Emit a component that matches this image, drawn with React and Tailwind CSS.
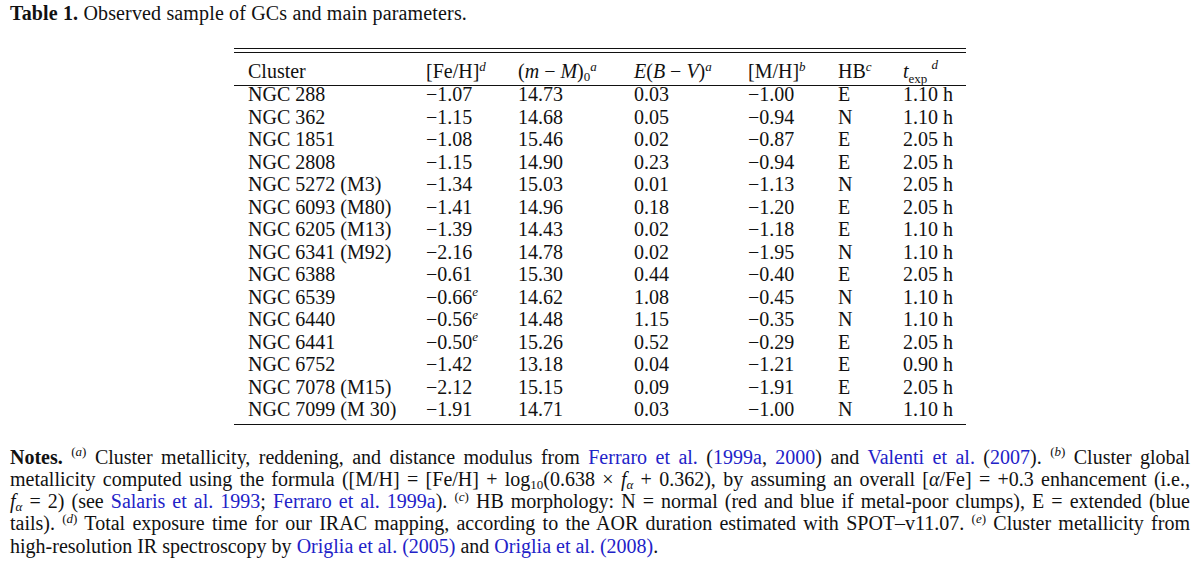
import React from 'react'

const rows = [
  ['NGC 288', '−1.07', '', '14.73', '0.03', '−1.00', 'E', '1.10 h'],
  ['NGC 362', '−1.15', '', '14.68', '0.05', '−0.94', 'N', '1.10 h'],
  ['NGC 1851', '−1.08', '', '15.46', '0.02', '−0.87', 'E', '2.05 h'],
  ['NGC 2808', '−1.15', '', '14.90', '0.23', '−0.94', 'E', '2.05 h'],
  ['NGC 5272 (M3)', '−1.34', '', '15.03', '0.01', '−1.13', 'N', '2.05 h'],
  ['NGC 6093 (M80)', '−1.41', '', '14.96', '0.18', '−1.20', 'E', '2.05 h'],
  ['NGC 6205 (M13)', '−1.39', '', '14.43', '0.02', '−1.18', 'E', '1.10 h'],
  ['NGC 6341 (M92)', '−2.16', '', '14.78', '0.02', '−1.95', 'N', '1.10 h'],
  ['NGC 6388', '−0.61', '', '15.30', '0.44', '−0.40', 'E', '2.05 h'],
  ['NGC 6539', '−0.66', 'e', '14.62', '1.08', '−0.45', 'N', '1.10 h'],
  ['NGC 6440', '−0.56', 'e', '14.48', '1.15', '−0.35', 'N', '1.10 h'],
  ['NGC 6441', '−0.50', 'e', '15.26', '0.52', '−0.29', 'E', '2.05 h'],
  ['NGC 6752', '−1.42', '', '13.18', '0.04', '−1.21', 'E', '0.90 h'],
  ['NGC 7078 (M15)', '−2.12', '', '15.15', '0.09', '−1.91', 'E', '2.05 h'],
  ['NGC 7099 (M 30)', '−1.91', '', '14.71', '0.03', '−1.00', 'N', '1.10 h'],
]

const cols = 'grid grid-cols-[178px_92px_116px_114px_90px_65px_63px]'

function Sup({ children }) {
  return <sup className="text-[13px] italic leading-none align-baseline relative -top-[0.55em]">{children}</sup>
}

function Ref({ children }) {
  return <span className="text-[#2222c8]">{children}</span>
}

function Mark({ children }) {
  return (
    <sup className="text-[13px] leading-none align-baseline relative -top-[0.55em]">
      (<i>{children}</i>)
    </sup>
  )
}

function Sub({ children }) {
  return <sub className="text-[13px] leading-none align-baseline relative top-[0.25em]">{children}</sub>
}

const line = 'block text-justify [text-align-last:justify] whitespace-nowrap'

export default function App() {
  return (
    <div className="w-[1200px] h-[564px] bg-white text-[#111] font-['Liberation_Serif','Times_New_Roman',serif] overflow-hidden">
      <div className="pl-[10px] pt-[2px] text-[20px] leading-[22px] tracking-[0.15px]">
        <b>Table 1.</b> Observed sample of GCs and main parameters.
      </div>

      {/* table */}
      <div className="ml-[234px] w-[732px] mt-[24px]">
        <div className="border-t-[1.5px] border-[#111]" />
        <div className="mt-[3px] border-t-[1.5px] border-[#111]" />
        <div className={`${cols} pl-[14px] text-[20px] leading-[22px] pt-[7px] h-[32px]`}>
          <div>Cluster</div>
          <div>[Fe/H]<Sup>d</Sup></div>
          <div>(<i>m</i> − <i>M</i>)<Sub>0</Sub><Sup>a</Sup></div>
          <div><i>E</i>(<i>B</i> − <i>V</i>)<Sup>a</Sup></div>
          <div>[M/H]<Sup>b</Sup></div>
          <div>HB<Sup>c</Sup></div>
          <div className="flex items-start">
            <i>t</i>
            <span className="flex flex-col leading-none text-[13px] -mt-[2px]">
              <i className="pl-[23px]">d</i>
              <span className="mt-[1px]">exp</span>
            </span>
          </div>
        </div>
        <div className="border-t-[1.5px] border-[#111]" />
        <div className="pl-[14px] text-[20px] leading-[22.5px] -mt-[3px]">
          {rows.map((r) => (
            <div key={r[0]} className={cols}>
              <div>{r[0]}</div>
              <div>{r[1]}{r[2] && <Sup>{r[2]}</Sup>}</div>
              <div>{r[3]}</div>
              <div>{r[4]}</div>
              <div>{r[5]}</div>
              <div>{r[6]}</div>
              <div>{r[7]}</div>
            </div>
          ))}
        </div>
        <div className="mt-[3px] border-t-[1.5px] border-[#111]" />
      </div>

      {/* notes */}
      <div className="mx-[10px] mt-[21px] text-[20px] leading-[22.3px]">
        <span className={line}>
          <b>Notes.</b> <Mark>a</Mark> Cluster metallicity, reddening, and distance modulus from <Ref>Ferraro et al.</Ref> (<Ref>1999a</Ref>, <Ref>2000</Ref>) and <Ref>Valenti et al.</Ref> (<Ref>2007</Ref>). <Mark>b</Mark> Cluster global
        </span>
        <span className={line}>
          metallicity computed using the formula ([M/H] = [Fe/H] + log<Sub>10</Sub>(0.638 × <i>f</i><Sub><i>α</i></Sub> + 0.362), by assuming an overall [<i>α</i>/Fe] = +0.3 enhancement (i.e.,
        </span>
        <span className={line}>
          <i>f</i><Sub><i>α</i></Sub> = 2) (see <Ref>Salaris et al. 1993</Ref>; <Ref>Ferraro et al. 1999a</Ref>). <Mark>c</Mark> HB morphology: N = normal (red and blue if metal-poor clumps), E = extended (blue
        </span>
        <span className={line}>
          tails). <Mark>d</Mark> Total exposure time for our IRAC mapping, according to the AOR duration estimated with SPOT–v11.07. <Mark>e</Mark> Cluster metallicity from
        </span>
        <span className="block whitespace-nowrap">
          high-resolution IR spectroscopy by <Ref>Origlia et al. (2005)</Ref> and <Ref>Origlia et al. (2008)</Ref>.
        </span>
      </div>
    </div>
  )
}
